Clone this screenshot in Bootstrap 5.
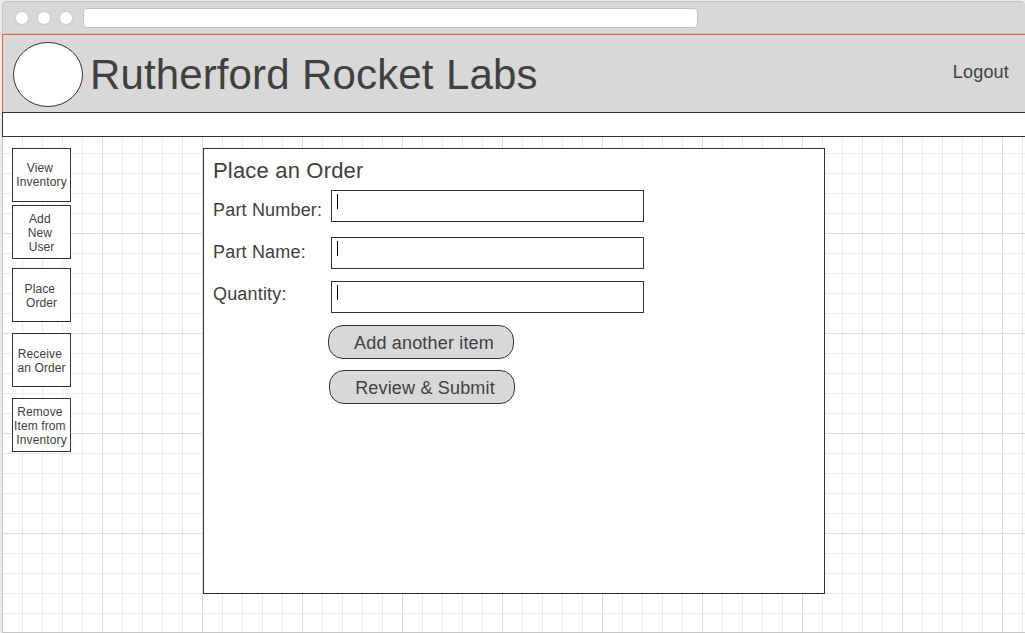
<!DOCTYPE html>
<html lang="en">
<head>
<meta charset="utf-8">
<title>Rutherford Rocket Labs</title>
<link href="https://cdn.jsdelivr.net/npm/bootstrap@5.3.0/dist/css/bootstrap.min.css" rel="stylesheet">
<style>
  body { font-family: "Liberation Sans", Arial, sans-serif; color: #404040; background: #ebebeb; height: 633px; overflow: hidden; font-size: 18px; letter-spacing: .18px; }
  .browser-frame { margin: 1px 0 0 2px; height: 632px; border: 1px solid #c4c4c4; border-right: 0; border-radius: 5px 5px 0 0; background: #d8d8d8; }
  .chrome-bar { height: 32px; padding: 0 0 0 12px; border-bottom: 1px solid #c4c4c4; }
  .chrome-dot { width: 14px; height: 14px; border: 1px solid #c8c8c8; margin-right: 8px; }
  .address-bar { width: 615px; height: 20px; margin-left: 2px; border: 1px solid #c4c4c4; border-radius: 4px; }
  .site-header { height: 78px; margin-left: -1px; padding: 0 16px 0 10px; background: #d8d8d8; border: 1px solid #ff5c40; border-width: 1px 0 0 1px; }
  .logo-oval { width: 70px; height: 65px; margin-top: 7px; }
  .site-title { font-size: 42px; line-height: 48px; margin: 16px 0 0 7px; letter-spacing: .12px; word-spacing: .7px; }
  .logout-link { line-height: 20px; margin-top: 27px; color: inherit; }
  .sub-bar { height: 25px; margin-left: -1px; border: 1px solid #333; border-right: 0; }
  .canvas-grid { height: 495px; padding: 11px 0 0 9px;
    background-color: #fff;
    background-image: linear-gradient(90deg, #dcdcdc 1px, transparent 1px), linear-gradient(#dcdcdc 1px, transparent 1px), linear-gradient(90deg, #ebebeb 1px, transparent 1px), linear-gradient(#ebebeb 1px, transparent 1px);
    background-size: 100px 100px, 100px 100px, 20px 20px, 20px 20px;
    background-position: 99px 0, 0 96px, 19px 0, 0 16px; }
  .side-menu { width: 59px; }
  .tile { height: 54px; padding-left: .2px; border: 1px solid #333; font-size: 12px; line-height: 14px; letter-spacing: .12px; color: inherit; white-space: nowrap; text-align: center; }
  .order-panel { width: 622px; height: 446px; margin-left: 132px; padding: 0 0 0 9px; border: 1px solid #333; }
  .order-title { font-size: 22px; line-height: 26px; margin: 9px 0 0; height: 32px; }
  .field-row label { width: 118px; line-height: 20px; }
  .entry-box { width: 313px; height: 32px; padding: 3px 0 0 5px; border: 1px solid #333; }
  .caret { width: 1px; height: 15px; background: #000; }
  .action-btn { width: 186px; height: 34px; padding: 2px 0 0 6px; border: 1px solid #333; border-radius: 15px; background: #d8d8d8; color: inherit; font-size: 18px; line-height: 30px; letter-spacing: .18px; }
</style>
</head>
<body>
<div class="browser-frame">
  <div class="chrome-bar d-flex align-items-center">
    <span class="chrome-dot rounded-circle bg-white"></span>
    <span class="chrome-dot rounded-circle bg-white"></span>
    <span class="chrome-dot rounded-circle bg-white"></span>
    <div class="address-bar bg-white"></div>
  </div>
  <header class="site-header d-flex align-items-start">
    <svg class="logo-oval flex-shrink-0" viewBox="0 0 70 65"><ellipse cx="35" cy="32.5" rx="34.5" ry="32" fill="#fff" stroke="#333"/></svg>
    <h1 class="site-title fw-normal">Rutherford Rocket Labs</h1>
    <a class="logout-link text-decoration-none ms-auto" href="#">Logout</a>
  </header>
  <div class="sub-bar bg-white"></div>
  <main class="canvas-grid d-flex align-items-start">
    <nav class="side-menu d-flex flex-column">
      <a class="tile bg-white d-block text-decoration-none" style="padding-top:12px" href="#">View&nbsp;<br>Inventory</a>
      <a class="tile bg-white d-block text-decoration-none" style="padding-top:6px;margin-top:3px" href="#">Add&nbsp;<br>New&nbsp;<br>User</a>
      <a class="tile bg-white d-block text-decoration-none" style="padding-top:13px;margin-top:9px" href="#">Place&nbsp;<br>Order</a>
      <a class="tile bg-white d-block text-decoration-none" style="padding-top:13px;margin-top:11px" href="#">Receive&nbsp;<br>an Order</a>
      <a class="tile bg-white d-block text-decoration-none" style="padding-top:6px;margin-top:11px" href="#">Remove&nbsp;<br>Item from&nbsp;<br>Inventory</a>
    </nav>
    <section class="order-panel bg-white">
      <h2 class="order-title fw-normal">Place an Order</h2>
      <div class="field-row d-flex"><label style="padding-top:10px">Part Number:</label><div class="entry-box"><div class="caret"></div></div></div>
      <div class="field-row d-flex" style="margin-top:15px"><label style="padding-top:5px">Part Name:</label><div class="entry-box"><div class="caret"></div></div></div>
      <div class="field-row d-flex" style="margin-top:12px"><label style="padding-top:3px">Quantity:</label><div class="entry-box"><div class="caret"></div></div></div>
      <button class="action-btn btn d-block" style="margin:12px 0 0 115px">Add another item</button>
      <button class="action-btn btn d-block" style="margin:11px 0 0 116px">Review &amp; Submit</button>
    </section>
  </main>
</div>
<script src="https://cdn.jsdelivr.net/npm/bootstrap@5.3.0/dist/js/bootstrap.bundle.min.js"></script>
</body>
</html>
